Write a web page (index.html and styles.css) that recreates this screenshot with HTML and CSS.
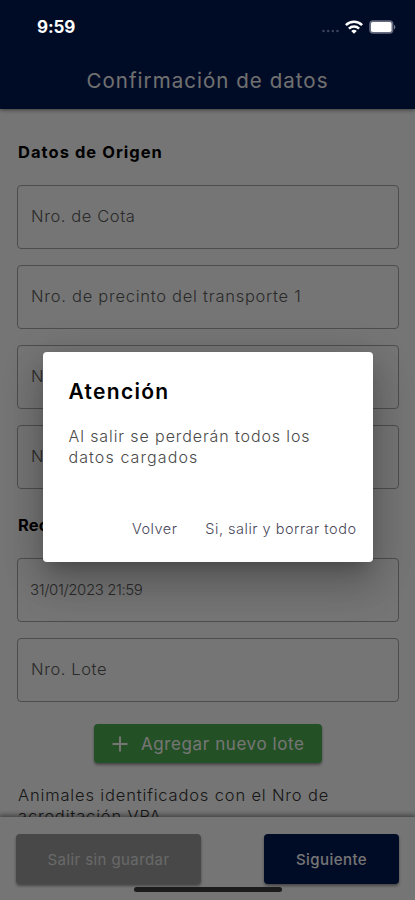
FILE: index.html
```html
<!DOCTYPE html>
<html lang="es">
<head>
<meta charset="utf-8">
<meta name="viewport" content="width=device-width, initial-scale=1">
<title>Confirmación de datos</title>
<link rel="stylesheet" href="styles.css">
</head>
<body>
<div class="screen">
  <header class="app-bar">
    <h1 class="app-title">Confirmación de datos</h1>
  </header>
  <main class="content">
    <h2 class="section-title">Datos de Origen</h2>
    <div class="field"><span class="label-short">Nro. de Cota</span></div>
    <div class="field"><span class="label-long">Nro. de precinto del transporte 1</span></div>
    <div class="field"><span class="label-short">N</span></div>
    <div class="field"><span class="label-short">N</span></div>
    <h2 class="section-title second">Rec</h2>
    <div class="field"><span class="date">31/01/2023 21:59</span></div>
    <div class="field"><span class="label-short">Nro. Lote</span></div>
    <button class="btn add">
      <svg class="plus" viewBox="0 0 16 16"><path d="M8 .5v15M.5 8h15" stroke="currentColor" stroke-width="2" fill="none"/></svg>
      <span>Agregar nuevo lote</span>
    </button>
    <p class="note">Animales identificados con el Nro de<br>acreditación VPA</p>
  </main>
  <footer class="bottom-bar">
    <button class="btn exit">Salir sin guardar</button>
    <button class="btn next">Siguiente</button>
  </footer>

  <div class="scrim">
    <section class="dialog" role="dialog">
      <h2 class="dialog-title">Atención</h2>
      <p class="dialog-text"><span class="line-one">Al salir se perderán todos los</span><br><span class="line-two">datos cargados</span></p>
      <div class="dialog-actions">
        <button class="text-btn">Volver</button>
        <button class="text-btn">Si, salir y borrar todo</button>
      </div>
    </section>
  </div>

  <div class="status-bar">
    <span class="time">9:59</span>
    <div class="status-icons">
      <svg class="dots" viewBox="0 0 18 4"><g fill="#3c4259"><circle cx="2" cy="2" r="1.3"/><circle cx="6.7" cy="2" r="1.3"/><circle cx="11.3" cy="2" r="1.3"/><circle cx="16" cy="2" r="1.3"/></g></svg>
      <svg class="wifi" viewBox="0 0 18 14"><g fill="none" stroke="#fff" stroke-width="2.5"><path d="M.9 5.1a11.5 11.5 0 0 1 16.2 0"/><path d="M3.9 8.6a7.3 7.3 0 0 1 10.2 0"/></g><path d="M9 13.8 6.2 11a4 4 0 0 1 5.6 0z" fill="#fff"/></svg>
      <svg class="battery" viewBox="0 0 27 14"><rect x=".2" y=".2" width="24.2" height="13.6" rx="4" fill="#666b80"/><rect x="2" y="2" width="20.5" height="10" rx="1.8" fill="#fff"/><path d="M25 4.7c1.8.7 1.8 3.9 0 4.6z" fill="#71768a"/></svg>
    </div>
  </div>
  <div class="home-indicator"></div>
</div>
</body>
</html>
```
FILE: styles.css
```css
* {
  box-sizing: border-box;
}

body {
  margin: 0;
  font-family: Inter, "Open Sans", sans-serif;
}

h1, h2, p {
  margin: 0;
}

button {
  border: 0;
  padding: 0;
  font-family: inherit;
  white-space: nowrap;
}

.screen {
  position: relative;
  display: flex;
  flex-direction: column;
  width: 415px;
  height: 900px;
  overflow: hidden;
  background: #fff;
}

.app-bar {
  flex: none;
  height: 109px;
  padding-top: 66px;
  background: #001853;
  box-shadow: 0 1px 4px rgba(0, 0, 0, 0.5);
  text-align: center;
  z-index: 1;
}

.app-title {
  color: #f4f4f4;
  font-size: 20.5px;
  font-weight: 400;
  line-height: 29px;
  letter-spacing: 1.04px;
}

.content {
  flex: 1;
  min-height: 0;
  overflow: hidden;
  display: flex;
  flex-direction: column;
  padding: 33px 16px 0 17px;
}

.section-title {
  flex: none;
  height: 20px;
  margin-bottom: 23px;
  padding-left: 1px;
  font-size: 16.5px;
  font-weight: 700;
  line-height: 21px;
  letter-spacing: 1.04px;
}

.section-title.second {
  margin-top: 10px;
  letter-spacing: 0.2px;
}

.field {
  flex: none;
  display: flex;
  align-items: center;
  height: 64px;
  margin-bottom: 16px;
  padding: 0 13px 2px;
  border: 1.5px solid #a8a8a8;
  border-radius: 4px;
  color: #5c5c5c;
  font-size: 16.5px;
  font-weight: 300;
}

.label-short {
  letter-spacing: 0.6px;
}

.label-long {
  letter-spacing: 0.74px;
}

.date {
  margin-left: -1px;
  font-size: 15px;
  letter-spacing: -0.4px;
}

.btn {
  flex: none;
  border-radius: 4px;
  color: #fff;
  box-shadow: 0 2px 3px rgba(0, 0, 0, 0.4);
}

.add {
  align-self: center;
  display: flex;
  align-items: center;
  width: 228px;
  height: 39px;
  margin-top: 6px;
  padding-left: 18px;
  background: #4caf50;
  font-size: 17px;
  font-weight: 400;
  letter-spacing: 0.6px;
}

.plus {
  width: 16px;
  height: 16px;
  margin-right: 13px;
}

.note {
  flex: none;
  margin-top: 22px;
  padding-left: 1px;
  color: #333;
  font-size: 16.5px;
  font-weight: 300;
  line-height: 21px;
  letter-spacing: 0.84px;
  white-space: nowrap;
}

.bottom-bar {
  flex: none;
  display: flex;
  justify-content: space-between;
  height: 83px;
  padding: 17px 16px 0;
  background: #fff;
  box-shadow: 0 -1px 5px 1px rgba(0, 0, 0, 0.45);
  z-index: 1;
}

.exit {
  width: 185px;
  height: 50px;
  background: #9e9e9e;
  color: #e4e4e4;
  font-size: 15px;
  font-weight: 400;
  letter-spacing: 0.41px;
}

.next {
  width: 135px;
  height: 50px;
  background: #001853;
  font-size: 15px;
  font-weight: 500;
  letter-spacing: 0.43px;
}

.scrim {
  position: absolute;
  inset: 0;
  z-index: 2;
  display: flex;
  align-items: center;
  justify-content: center;
  padding-top: 14px;
  background: rgba(0, 0, 0, 0.54);
}

.dialog {
  display: flex;
  flex-direction: column;
  width: 330px;
  height: 210px;
  padding: 26px 16px 22px 26px;
  border-radius: 4px;
  background: #fff;
  box-shadow: 0 11px 15px -7px rgba(0, 0, 0, 0.2), 0 24px 38px 3px rgba(0, 0, 0, 0.14), 0 9px 40px 4px rgba(0, 0, 0, 0.14);
}

.dialog-title {
  font-size: 21px;
  font-weight: 600;
  line-height: 27px;
  letter-spacing: 1.3px;
}

.dialog-text {
  margin-top: 21px;
  color: #4a4a4a;
  font-size: 16px;
  font-weight: 300;
  line-height: 21px;
  white-space: nowrap;
}

.line-one {
  letter-spacing: 0.9px;
}

.line-two {
  letter-spacing: 1.1px;
}

.dialog-actions {
  display: flex;
  justify-content: flex-end;
  gap: 28px;
  margin-top: auto;
}

.text-btn {
  background: none;
  color: #48485a;
  font-size: 14.5px;
  font-weight: 300;
  line-height: 22px;
  letter-spacing: 0.5px;
}

.status-bar {
  position: absolute;
  top: 0;
  left: 0;
  right: 0;
  z-index: 3;
  display: flex;
  justify-content: space-between;
  height: 54px;
  padding: 0 19px 0 37px;
  align-items: center;
  color: #fff;
}

.time {
  font-size: 17px;
  font-weight: 700;
  letter-spacing: -0.1px;
}

.status-icons {
  display: flex;
  align-items: center;
}

.dots {
  width: 19px;
  height: 4px;
  margin: 8px 5px 0 0;
}

.wifi {
  width: 18px;
  height: 14px;
  margin-right: 6px;
}

.battery {
  width: 27px;
  height: 14px;
}

.home-indicator {
  position: absolute;
  left: 134px;
  bottom: 8px;
  z-index: 3;
  width: 148px;
  height: 5px;
  border-radius: 3px;
  background: #1c1c1c;
}
```
